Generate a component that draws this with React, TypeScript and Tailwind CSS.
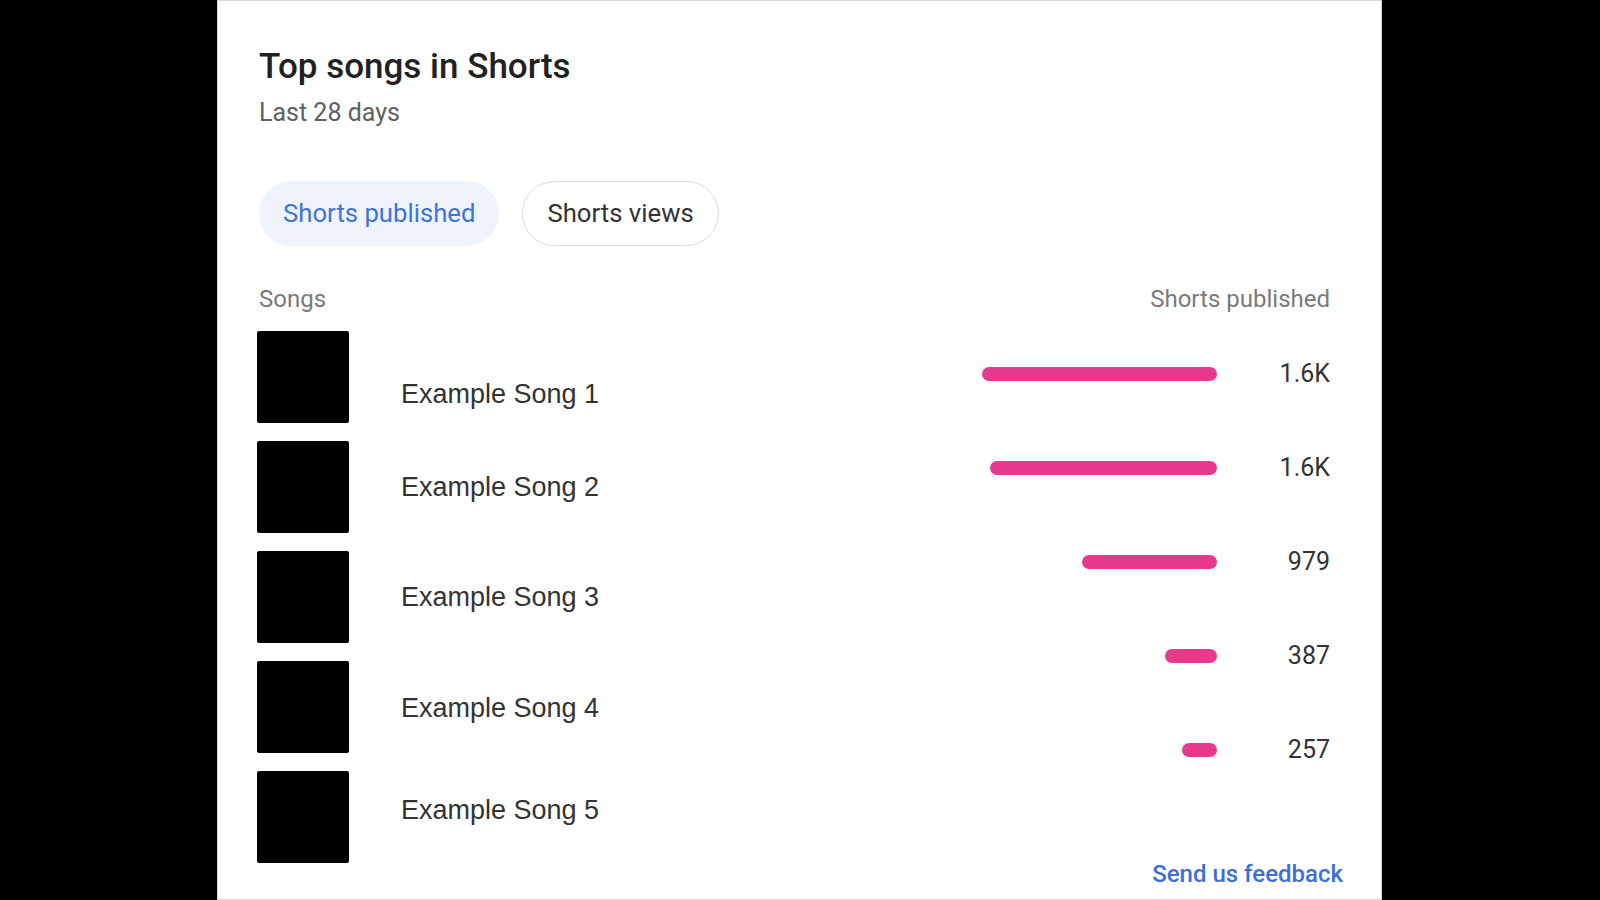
import React from "react";

const songs = [
  { name: "Example Song 1", shift: "translate-y-[17px]" },
  { name: "Example Song 2", shift: "" },
  { name: "Example Song 3", shift: "" },
  { name: "Example Song 4", shift: "translate-y-[1px]" },
  { name: "Example Song 5", shift: "-translate-y-[7px]" },
];

const bars = [
  { value: "1.6K", width: 235 },
  { value: "1.6K", width: 227 },
  { value: "979", width: 135 },
  { value: "387", width: 52 },
  { value: "257", width: 35 },
];

export default function App() {
  return (
    <div className="w-[1600px] h-[900px] bg-black flex pl-[217px] overflow-hidden">
      <div
        className="w-[1165px] h-[900px] bg-white border border-[#d4d4d4] pl-[41px] pr-[38px] pt-[46px] flex flex-col"
        style={{ fontFamily: "Roboto, 'Noto Sans', sans-serif" }}
      >
        <h1 className="text-[35px] leading-[40px] font-medium text-[#212121]">Top songs in Shorts</h1>
        <div className="mt-[11px] text-[25px] leading-[30px] text-[#606060]">Last 28 days</div>

        <div className="mt-[53px] flex gap-[23px]">
          <button className="h-[65px] px-[24px] rounded-full bg-[#eef3fc] text-[25.7px] text-[#3e74da]">
            Shorts published
          </button>
          <button className="h-[65px] px-[24px] rounded-full bg-white border border-[#dcdcdc] text-[25.7px] text-[#333333]">
            Shorts views
          </button>
        </div>

        <div className="mt-[39px] flex justify-between">
          <div className="flex flex-col">
            <div className="text-[24px] leading-[28px] text-[#7a7a7a]">Songs</div>
            <div className="mt-[18px] flex flex-col gap-[18px]">
              {songs.map((s) => (
                <div key={s.name} className="flex items-center gap-[52px] -ml-[2px]">
                  <div className="w-[92px] h-[92px] bg-black rounded-[2px]" />
                  <div
                    className={`text-[27px] text-[#333333] ${s.shift}`}
                    style={{ fontFamily: "'Liberation Sans', Arial, sans-serif" }}
                  >
                    {s.name}
                  </div>
                </div>
              ))}
            </div>
          </div>

          <div className="flex flex-col items-end">
            <div className="pr-[13px] text-[24px] leading-[28px] text-[#7a7a7a]">Shorts published</div>
            <div className="mt-[14px] flex flex-col">
              {bars.map((b, i) => (
                <div key={i} className="h-[94px] flex items-center justify-end">
                  <div className="h-[14px] rounded-full bg-[#e8398e]" style={{ width: b.width }} />
                  <div className="w-[126px] pr-[13px] text-right text-[25px] text-[#333333]">{b.value}</div>
                </div>
              ))}
            </div>
            <a href="#" className="mt-[63px] text-[24px] leading-[28px] font-medium text-[#3d6fd6]">
              Send us feedback
            </a>
          </div>
        </div>
      </div>
    </div>
  );
}
